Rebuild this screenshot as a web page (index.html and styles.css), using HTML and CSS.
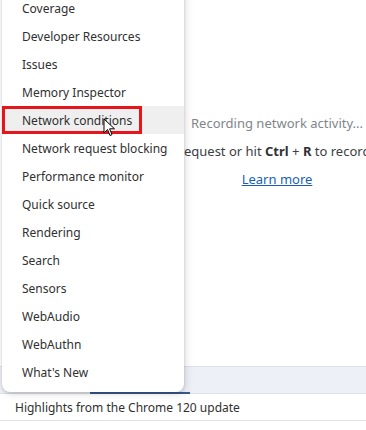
FILE: index.html
```html
<!DOCTYPE html>
<html lang="en">
<head>
    <meta charset="UTF-8">
    <title>Network panel - More tools</title>
    <link rel="stylesheet" href="styles.css">
</head>
<body>
    <div class="devtools">
        <div class="network-empty">
            <div class="empty-line muted"><span>Recording network activity...</span></div>
            <div class="empty-line"><span>Perform a request or hit <b>Ctrl</b> + <b>R</b> to record the reload.</span></div>
            <div class="empty-line"><a href="#" class="learn-more">Learn more</a></div>
        </div>

        <div class="drawer">
            <div class="drawer-tabs">
                <div class="drawer-tab selected"></div>
            </div>
            <div class="drawer-row">Highlights from the Chrome 120 update</div>
        </div>

        <!-- more tools context menu -->
        <div class="menu">
            <div class="menu-item">Coverage</div>
            <div class="menu-item">Developer Resources</div>
            <div class="menu-item">Issues</div>
            <div class="menu-item">Memory Inspector</div>
            <div class="menu-item hover">Network conditions</div>
            <div class="menu-item">Network request blocking</div>
            <div class="menu-item">Performance monitor</div>
            <div class="menu-item">Quick source</div>
            <div class="menu-item">Rendering</div>
            <div class="menu-item">Search</div>
            <div class="menu-item">Sensors</div>
            <div class="menu-item">WebAudio</div>
            <div class="menu-item">WebAuthn</div>
            <div class="menu-item">What's New</div>
        </div>

        <div class="highlight-box"></div>

        <svg class="cursor" width="13" height="20" viewBox="0 0 13 20">
            <path d="M1 1 L1 15 L4.5 11.5 L7 17.5 L9 16.6 L6.6 10.8 L11.5 10.8 Z" fill="#fff" stroke="#000" stroke-width="1"/>
        </svg>
    </div>
</body>
</html>
```

FILE: styles.css
```css
body {
    margin: 0;
    font-family: "Noto Sans", "Open Sans", sans-serif;
    font-size: 12px;
    color: #202124;
    background: #fff;
}
.devtools {
    position: relative;
    width: 366px;
    height: 430px;
    overflow: hidden;
    display: flex;
    flex-direction: column;
}
.network-empty {
    height: 366px;
    padding-left: 188px;
    padding-top: 109px;
    box-sizing: border-box;
}
.empty-line {
    height: 28px;
    line-height: 28px;
    white-space: nowrap;
    display: flex;
    justify-content: center;
    font-size: 13px;
    color: #3c4043;
}
.empty-line b {
    color: #303134;
}
.muted {
    color: #80868b;
}
.learn-more {
    color: #1a5fb4;
    text-decoration: underline;
}
.drawer-tabs {
    height: 26px;
    background: #eef0f7;
    border-top: 1px solid #dfe1ea;
    border-bottom: 1px solid #dfe1ea;
    position: relative;
}
.drawer-tab.selected {
    position: absolute;
    left: 90px;
    bottom: -1px;
    width: 100px;
    height: 2px;
    background: #3b5a8c;
}
.drawer-row {
    height: 26px;
    line-height: 27px;
    padding-left: 15px;
    border-bottom: 1px solid #e4e4e4;
    color: #303030;
}
.menu {
    position: absolute;
    left: 2px;
    top: -12px;
    width: 182px;
    padding: 6px 0;
    background: #fff;
    border-radius: 0 0 8px 8px;
    box-shadow: 0 1px 3px rgba(0,0,0,0.18), 2px 2px 8px rgba(0,0,0,0.12);
}
.menu-item {
    height: 28px;
    line-height: 30px;
    padding-left: 20px;
    color: #303030;
    white-space: nowrap;
}
.menu-item.hover {
    background: #efefef;
}
.highlight-box {
    position: absolute;
    left: 2px;
    top: 106px;
    width: 134px;
    height: 22px;
    border: 3px solid #e8141b;
}
.cursor {
    position: absolute;
    left: 103px;
    top: 118px;
}
```
